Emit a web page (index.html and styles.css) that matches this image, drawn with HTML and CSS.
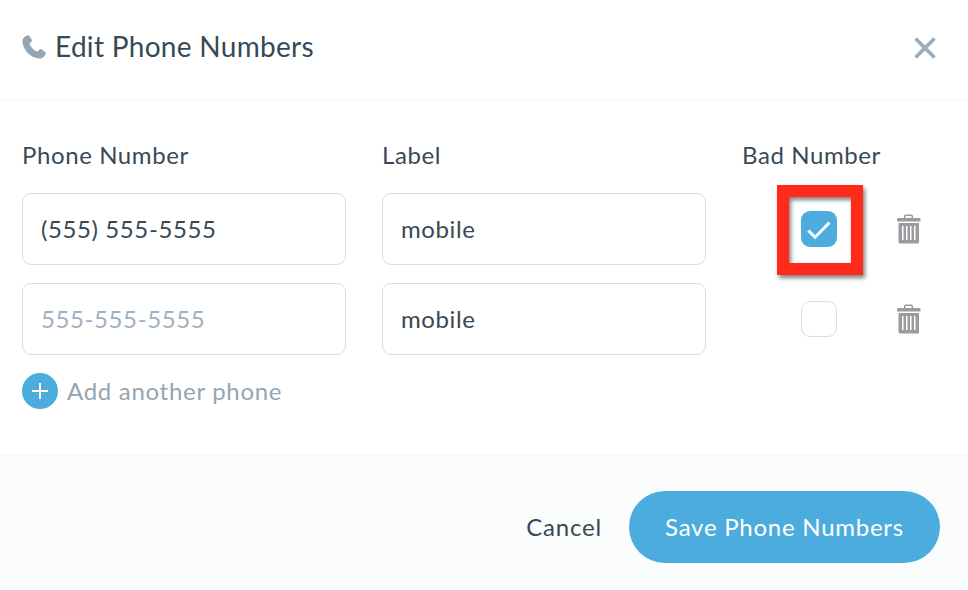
FILE: index.html
```html
<!DOCTYPE html>
<html lang="en">

<head>
    <meta charset="utf-8">
    <meta name="viewport" content="width=device-width, initial-scale=1.0">
    <title>Edit Phone Numbers</title>
    <link rel="stylesheet" href="styles.css">
</head>

<body>

    <form class="modal">

        <header class="modal_header">
            <svg class="icon_phone" viewBox="0 0 24 24">
                <path d="M5.300 0.300C6 0 6.700 0.200 7.100 0.800L9.700 4.600C10.100 5.200 10 5.900 9.500 6.400L7.900 8C7.500 8.400 7.500 8.900 7.700 9.400C9 12.200 11.800 15 14.600 16.300C15.100 16.600 15.600 16.500 16 16.100L17.600 14.500C18.100 14 18.800 13.900 19.400 14.300L23.200 16.900C23.800 17.300 24 18 23.700 18.700C22.700 21.200 20.300 23.900 17.600 23.600C8.500 22.700 1.300 15.500 0.400 6.400C0.100 3.700 2.800 1.300 5.300 0.300Z" />
            </svg>
            <h1>Edit Phone Numbers</h1>
            <button class="close" type="button" aria-label="Close">
                <svg viewBox="0 0 22 22">
                    <path d="M1.500 1.500L20.500 20.500M20.500 1.500L1.500 20.500" />
                </svg>
            </button>
        </header>

        <main class="modal_body">
            <div class="row labels">
                <label for="phone1">Phone Number</label>
                <label for="label1">Label</label>
                <label for="bad1">Bad Number</label>
            </div>

            <div class="row">
                <input class="field" id="phone1" type="text" value="(555) 555-5555">
                <input class="field" id="label1" type="text" value="mobile">
                <div class="bad">
                    <input class="check" id="bad1" type="checkbox" checked>
                    <svg class="tick" viewBox="0 0 36 36">
                        <path d="M7.300 19.500L14 26.200L28.500 11.500" />
                    </svg>
                    <span class="highlight"></span>
                </div>
                <button class="delete" type="button" aria-label="Delete">
                    <svg viewBox="0 0 24 30">
                        <path fill-rule="evenodd" d="M7 4V2Q7 0.500 8.500 0.500H14.500Q16 0.500 16 2V4H22Q23.500 4 23.500 5V7.500H0V5Q0 4 1.500 4ZM8.500 4H14.500V2H8.500Z" />
                        <path fill-rule="evenodd" d="M1.500 9H22V28Q22 29.500 20.500 29.500H3Q1.500 29.500 1.500 28ZM5 12V26H6.500V12ZM9 12V26H10.500V12ZM13 12V26H14.500V12ZM17 12V26H18.500V12Z" />
                    </svg>
                </button>
            </div>

            <div class="row">
                <input class="field" type="text" placeholder="555-555-5555">
                <input class="field" type="text" value="mobile">
                <div class="bad">
                    <input class="check" type="checkbox">
                </div>
                <button class="delete" type="button" aria-label="Delete">
                    <svg viewBox="0 0 24 30">
                        <path fill-rule="evenodd" d="M7 4V2Q7 0.500 8.500 0.500H14.500Q16 0.500 16 2V4H22Q23.500 4 23.500 5V7.500H0V5Q0 4 1.500 4ZM8.500 4H14.500V2H8.500Z" />
                        <path fill-rule="evenodd" d="M1.500 9H22V28Q22 29.500 20.500 29.500H3Q1.500 29.500 1.500 28ZM5 12V26H6.500V12ZM9 12V26H10.500V12ZM13 12V26H14.500V12ZM17 12V26H18.500V12Z" />
                    </svg>
                </button>
            </div>

            <button class="add" type="button">
                <svg viewBox="0 0 36 36">
                    <circle cx="18" cy="18" r="18" />
                    <path d="M18 10V26M10 18H26" />
                </svg>
                <span>Add another phone</span>
            </button>
        </main>

        <footer class="modal_footer">
            <button class="cancel" type="button">Cancel</button>
            <button class="save" type="submit">Save Phone Numbers</button>
        </footer>

    </form>

</body>

</html>
```
FILE: styles.css
```css
* {
    box-sizing: border-box;
}

body {
    margin: 0;
    background-color: #ffffff;
    color: #384955;
    font-family: Lato, "Open Sans", sans-serif;
    font-size: 24px;
}

button {
    background: none;
    border: none;
    padding: 0;
    color: inherit;
    font: inherit;
    cursor: pointer;
}

svg {
    display: block;
}

.modal {
    height: 590px;
    display: flex;
    flex-direction: column;
}

.modal_header {
    height: 101px;
    padding: 0 32px 6px 22px;
    border-bottom: 1px solid #f5f6f6;
    display: flex;
    align-items: center;
}

.icon_phone {
    width: 24px;
    height: 24px;
    margin-right: 9px;
    fill: #94a5b4;
}

h1 {
    margin: 0;
    padding-bottom: 2px;
    font-size: 28px;
    font-weight: 400;
    line-height: 34px;
    letter-spacing: 0.3px;
}

.close {
    margin: 2px 0 0 auto;
}

.close svg {
    width: 22px;
    height: 22px;
    stroke: #9badbd;
    stroke-width: 3.8;
}

.modal_body {
    flex: 1;
    padding: 38px 22px 0;
}

.row {
    display: grid;
    grid-template-columns: 324px 324px 119px 24px;
    column-gap: 36px;
    align-items: center;
    margin-bottom: 18px;
}

.labels {
    height: 36px;
    padding-bottom: 6px;
    letter-spacing: 0.6px;
    white-space: nowrap;
}

.field {
    width: 100%;
    height: 72px;
    padding: 0 18px 2px;
    border: 1px solid #d5dee2;
    border-radius: 9px;
    color: #384955;
    font: inherit;
    letter-spacing: 0.6px;
}

.field::placeholder {
    color: #9fb1c1;
}

.bad {
    position: relative;
    width: 36px;
    height: 36px;
    margin-left: 59px;
}

.check {
    appearance: none;
    display: block;
    width: 36px;
    height: 36px;
    margin: 0;
    border: 1px solid #d5dee2;
    border-radius: 9px;
}

.check:checked {
    border: none;
    background-color: #4dacde;
}

.tick {
    position: absolute;
    top: 0;
    left: 0;
    width: 36px;
    height: 36px;
    fill: none;
    stroke: #ffffff;
    stroke-width: 3;
    pointer-events: none;
}

/* red frame round the bad number box */
.highlight {
    position: absolute;
    top: -26px;
    left: -24px;
    width: 86px;
    height: 90px;
    border: 12px solid #ff2a1a;
    filter: drop-shadow(2px 3px 2px rgba(0, 0, 0, 0.5));
    pointer-events: none;
}

.delete svg {
    width: 24px;
    height: 30px;
    fill: #999c9f;
}

.add {
    display: flex;
    align-items: center;
    gap: 9px;
    color: #94a5b4;
    letter-spacing: 0.7px;
}

.add span {
    padding-bottom: 2px;
}

.add svg {
    width: 36px;
    height: 36px;
    fill: #4dacde;
    stroke: #ffffff;
    stroke-width: 2;
}

.add circle {
    stroke: none;
}

.modal_footer {
    height: 136px;
    padding: 9px 28px 0;
    border-top: 1px solid #f5f6f6;
    background-color: #fbfdfd;
    display: flex;
    justify-content: flex-end;
    align-items: center;
    gap: 27px;
}

.cancel {
    padding-bottom: 2px;
    letter-spacing: 0.8px;
}

.save {
    width: 311px;
    height: 72px;
    padding-bottom: 2px;
    border-radius: 36px;
    background-color: #4dacde;
    color: #ffffff;
    letter-spacing: 0.75px;
}
```
